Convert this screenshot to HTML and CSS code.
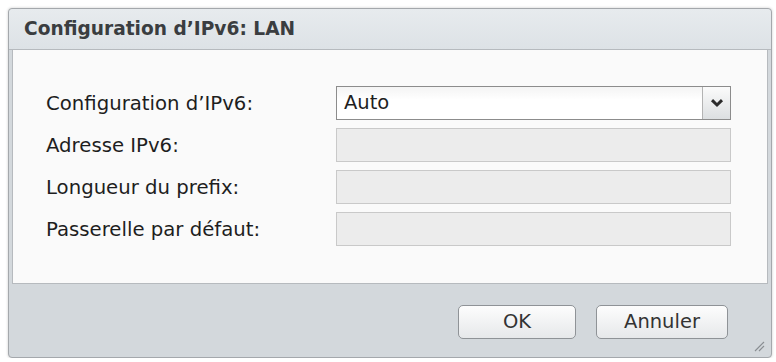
FILE: index.html
```html
<!DOCTYPE html>
<html lang="fr">

<head>
  <meta charset="UTF-8">
  <meta name="viewport" content="width=device-width, initial-scale=1.0">
  <title>Configuration d'IPv6: LAN</title>
  <link rel="stylesheet" href="styles.css">
</head>

<body>
  <!-- fenetre de dialogue -->
  <div class="dialog">
    <div class="dialog-title">Configuration d’IPv6: LAN</div>
    <div class="dialog-body">
      <div class="row">
        <div class="label">Configuration d’IPv6:</div>
        <div class="combo">
          <span class="combo-text">Auto</span>
          <span class="combo-btn">
            <svg width="14" height="10" viewBox="0 0 14 10">
              <path d="M2 2.2 L7 7 L12 2.2" fill="none" stroke="#2b2b2b" stroke-width="3" />
            </svg>
          </span>
        </div>
      </div>
      <div class="row">
        <div class="label">Adresse IPv6:</div>
        <div class="field"></div>
      </div>
      <div class="row">
        <div class="label">Longueur du prefix:</div>
        <div class="field"></div>
      </div>
      <div class="row">
        <div class="label">Passerelle par défaut:</div>
        <div class="field"></div>
      </div>
    </div>
    <div class="dialog-footer">
      <div class="btn">OK</div>
      <div class="btn">Annuler</div>
      <svg class="grip" width="12" height="12" viewBox="0 0 12 12">
        <path d="M2 11 L11 2 M6 11 L11 6" stroke="#8a8e92" stroke-width="1.2" />
      </svg>
    </div>
  </div>
</body>

</html>
```

FILE: styles.css
```css
body {
  margin: 0;
  background-color: #ffffff;
  font-family: 'DejaVu Sans', Verdana, sans-serif;
}

.dialog {
  margin: 8px 0 0 8px;
  width: 756px;
  padding: 0 3px 3px;
  background-color: #d3d8dc;
  border: 1px solid #a4a8ac;
  border-radius: 4px;
  box-shadow: 0 0 3px rgba(0, 0, 0, 0.2);
}

.dialog-title {
  margin: 0 -3px;
  height: 40px;
  padding-left: 15px;
  background: linear-gradient(#e7ebee, #dde2e6);
  border-bottom: 1px solid #b6babe;
  border-radius: 4px 4px 0 0;
  color: #3a3d40;
  font-size: 18.6px;
  font-weight: bold;
  line-height: 40px;
}

.dialog-body {
  height: 197px;
  padding: 36px 0 0 33px;
  background-color: #fafafa;
  border: 1px solid #b6babe;
  border-top: 0;
}

.row {
  display: flex;
  align-items: center;
  height: 34px;
  margin-bottom: 8px;
}

.label {
  width: 290px;
  color: #1e1e1e;
  font-size: 19.7px;
}

.combo,
.field {
  box-sizing: border-box;
  width: 395px;
  height: 34px;
}

.field {
  background-color: #ececec;
  border: 1px solid #c9c9c9;
}

.combo {
  display: flex;
  background: linear-gradient(#f4f4f4, #ffffff 40%);
  border: 1px solid #8c8c8c;
}

.combo-text {
  flex: 1;
  padding-left: 7px;
  color: #1e1e1e;
  font-size: 19.5px;
  line-height: 32px;
}

.combo-btn {
  display: flex;
  align-items: center;
  justify-content: center;
  width: 27px;
  background: linear-gradient(#fbfbfb, #dcdfe1);
  border-left: 1px solid #b3b3b3;
}

.dialog-footer {
  display: flex;
  justify-content: flex-end;
  align-items: flex-start;
  gap: 20px;
  height: 49px;
  padding: 21px 40px 0 0;
  position: relative;
}

.btn {
  box-sizing: border-box;
  height: 34px;
  line-height: 32px;
  text-align: center;
  background: linear-gradient(#fdfdfd, #e6e8ea);
  border: 1px solid #8f9397;
  border-radius: 5px;
  color: #333333;
  font-size: 19.5px;
}

.btn:first-child {
  width: 118px;
}

.btn:nth-child(2) {
  width: 132px;
}

.grip {
  position: absolute;
  right: 3px;
  bottom: 2px;
}
```
